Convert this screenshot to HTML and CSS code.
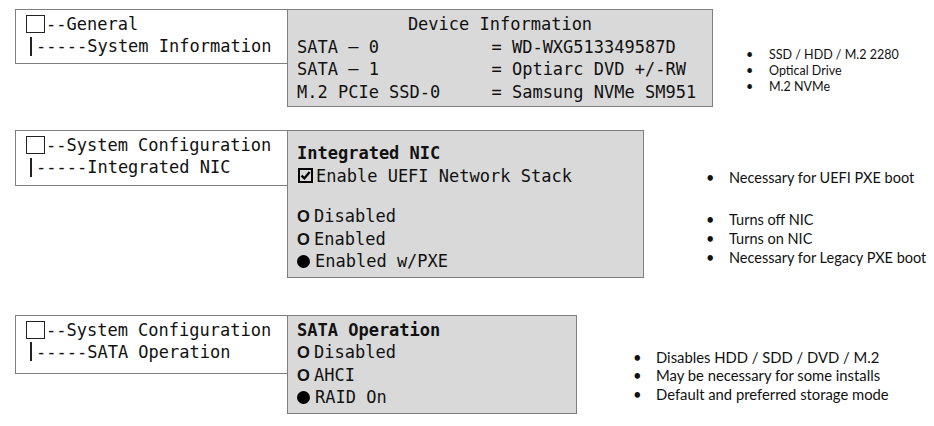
FILE: index.html
```html
<!DOCTYPE html>
<html>
<head>
<meta charset="utf-8">
<link rel="stylesheet" href="styles.css">
</head>
<body>
<div class="page">
  <section class="row row-info">
    <div class="tree">
      <div class="tline"><span class="tbox"></span>--General</div>
      <div class="tline"><span class="tbar"></span>-----System Information</div>
    </div>
    <div class="panel panel-info">
      <div class="ptitle">Device Information</div>
      <div class="pline">SATA – 0           = WD-WXG513349587D</div>
      <div class="pline">SATA – 1           = Optiarc DVD +/-RW</div>
      <div class="pline">M.2 PCIe SSD-0     = Samsung NVMe SM951</div>
    </div>
    <ul class="notes notes-info">
      <li>SSD / HDD / M.2 2280</li>
      <li>Optical Drive</li>
      <li>M.2 NVMe</li>
    </ul>
  </section>

  <section class="row row-nic">
    <div class="tree">
      <div class="tline"><span class="tbox"></span>--System Configuration</div>
      <div class="tline"><span class="tbar"></span>-----Integrated NIC</div>
    </div>
    <div class="panel panel-nic">
      <div class="phead">Integrated NIC</div>
      <div class="pline"><svg class="chk" viewBox="0 0 15 15" width="15" height="15"><rect x="1" y="1" width="13" height="13" fill="none" stroke="#000" stroke-width="2"/><path d="M3.5 7.6 L6.4 10.4 L11.6 4" fill="none" stroke="#000" stroke-width="2.3"/></svg>Enable UEFI Network Stack</div>
      <div class="pgap"></div>
      <div class="pline"><span class="ro">O</span>Disabled</div>
      <div class="pline"><span class="ro">O</span>Enabled</div>
      <div class="pline"><span class="rf"></span>Enabled w/PXE</div>
    </div>
    <div class="notes-col notes-nic">
      <ul class="notes">
        <li>Necessary for UEFI PXE boot</li>
      </ul>
      <ul class="notes notes-group">
        <li>Turns off NIC</li>
        <li>Turns on NIC</li>
        <li>Necessary for Legacy PXE boot</li>
      </ul>
    </div>
  </section>

  <section class="row row-sata">
    <div class="tree">
      <div class="tline"><span class="tbox"></span>--System Configuration</div>
      <div class="tline"><span class="tbar"></span>-----SATA Operation</div>
    </div>
    <div class="panel panel-sata">
      <div class="phead">SATA Operation</div>
      <div class="pline"><span class="ro">O</span>Disabled</div>
      <div class="pline"><span class="ro">O</span>AHCI</div>
      <div class="pline"><span class="rf"></span>RAID On</div>
    </div>
    <ul class="notes notes-sata">
      <li>Disables HDD / SDD / DVD / M.2</li>
      <li>May be necessary for some installs</li>
      <li>Default and preferred storage mode</li>
    </ul>
  </section>
</div>
</body>
</html>
```

FILE: styles.css
```css
html, body {
  margin: 0;
  padding: 0;
  background: #ffffff;
}

.page {
  padding: 9px 0 0 15px;
  display: flex;
  flex-direction: column;
}

.row {
  display: flex;
  align-items: flex-start;
}

.row-nic {
  margin-top: 23px;
}

.row-sata {
  margin-top: 37px;
}

.tree {
  box-sizing: border-box;
  width: 272px;
  border: 1px solid #7f7f7f;
  border-right: none;
  padding: 3px 0 6px 10px;
  font-family: "DejaVu Sans Mono", "Liberation Mono", monospace;
  font-size: 17px;
  color: #111;
  background: #fff;
}

.row-nic .tree {
  padding-bottom: 7px;
}

.row-sata .tree {
  padding-bottom: 10px;
}

.tline {
  height: 22px;
  line-height: 22px;
  white-space: pre;
  display: flex;
  align-items: center;
}

.tbox {
  display: inline-block;
  box-sizing: border-box;
  width: 19px;
  height: 18px;
  border: 1.5px solid #222;
  margin-right: 1px;
}

.tbar {
  display: inline-block;
  width: 2px;
  height: 19px;
  background: #222;
  margin-left: 4px;
  margin-right: 4px;
}

.panel {
  box-sizing: border-box;
  border: 1px solid #7f7f7f;
  background: #d9d9d9;
  font-family: "DejaVu Sans Mono", "Liberation Mono", monospace;
  font-size: 17px;
  color: #111;
  padding: 2px 0 4px 9px;
}

.panel-info {
  width: 426px;
  padding-top: 3px;
  padding-bottom: 3px;
}

.panel-nic {
  width: 357px;
  padding-top: 11px;
}

.panel-sata {
  width: 290px;
  padding-top: 3px;
}

.ptitle {
  text-align: center;
  line-height: 22.5px;
  padding-right: 9px;
}

.phead {
  font-weight: bold;
  line-height: 22.5px;
}

.pline {
  white-space: pre;
  line-height: 22.5px;
  height: 22.5px;
  display: flex;
  align-items: center;
}

.pgap {
  height: 18px;
}

.chk {
  margin: 0 3px 0 1px;
}

.ro {
  font-family: "Liberation Sans", Arial, sans-serif;
  font-weight: bold;
  font-size: 16.5px;
  width: 13px;
  margin-right: 4px;
  display: inline-block;
  text-align: center;
}

.rf {
  display: inline-block;
  width: 13px;
  height: 13px;
  border-radius: 50%;
  background: #000;
  margin: 0 5px 0 0;
}

.notes {
  list-style: none;
  margin: 0;
  padding: 0;
  font-family: Lato, "Liberation Sans", sans-serif;
  color: #111;
}

.notes li {
  position: relative;
  padding-left: 23px;
  white-space: nowrap;
}

.notes li::before {
  content: "•";
  position: absolute;
  left: 0;
  top: 0;
}

.notes-info {
  margin: 38px 0 0 33px;
  font-size: 12.5px;
  line-height: 16px;
}

.notes-col {
  margin: 38px 0 0 62px;
  font-size: 14.5px;
  line-height: 19px;
}

.notes-group {
  margin-top: 23px;
}

.notes-sata {
  margin: 33px 0 0 56px;
  font-size: 14.8px;
  line-height: 18.5px;
}
```
